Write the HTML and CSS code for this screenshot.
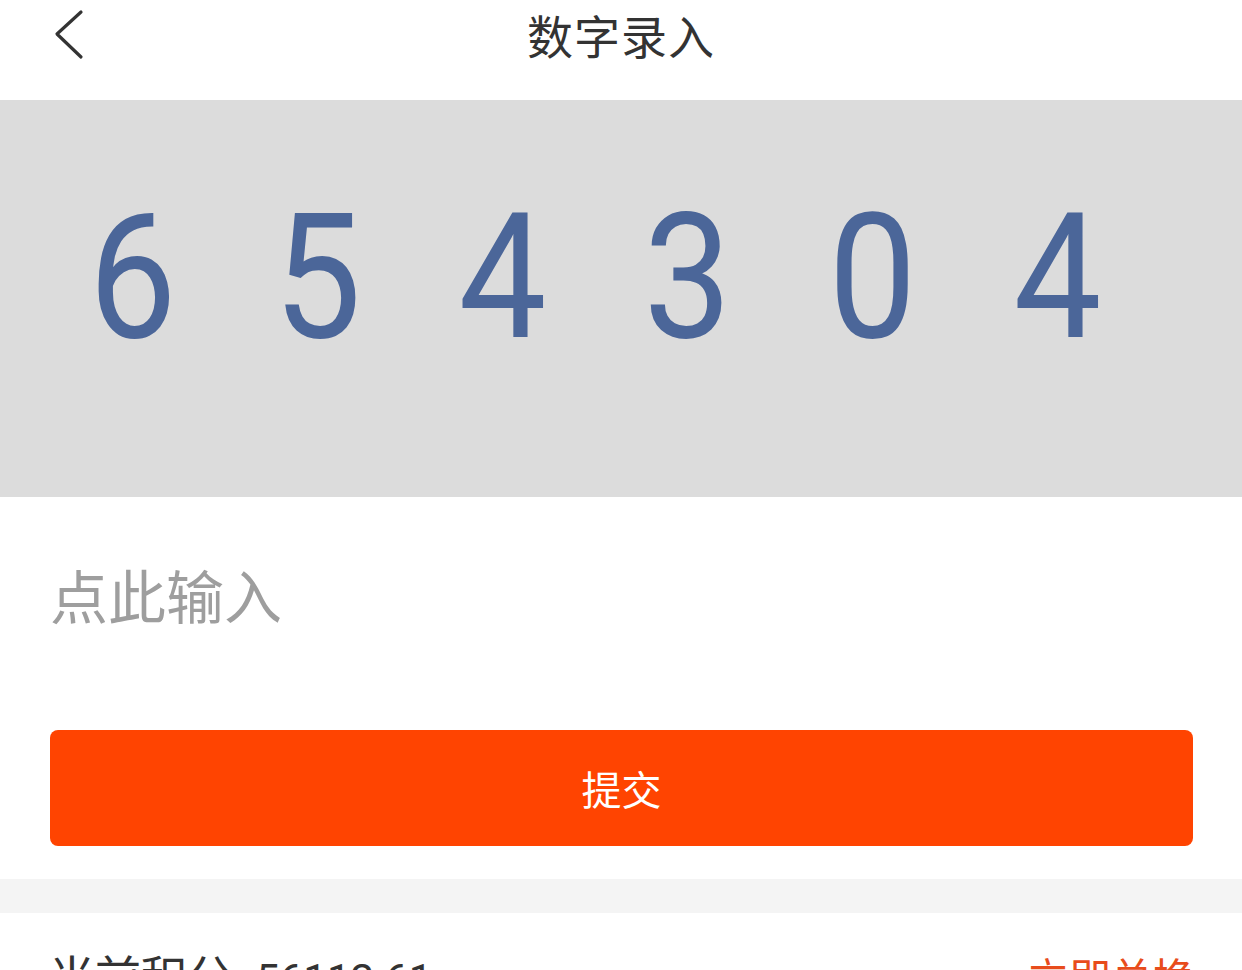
FILE: index.html
```html
<!DOCTYPE html>
<html lang="zh">
<head>
<meta charset="utf-8">
<title>数字录入</title>
<link rel="stylesheet" href="styles.css">
</head>
<body>
<div class="page">
  <header class="topbar">
    <span class="back">
      <svg width="40" height="60" viewBox="0 0 40 60"><path d="M30 10 L6 32 L30 55" fill="none" stroke="#333" stroke-width="3.2" stroke-linecap="round" stroke-linejoin="round"/></svg>
    </span>
    <h1 class="title">数字录入</h1>
  </header>
  <section class="captcha">
    <div class="digits">
      <span class="digit">6</span>
      <span class="digit">5</span>
      <span class="digit">4</span>
      <span class="digit">3</span>
      <span class="digit">0</span>
      <span class="digit">4</span>
    </div>
  </section>
  <section class="form">
    <div class="input">点此输入</div>
    <button class="submit">提交</button>
  </section>
  <div class="gap"></div>
  <section class="points">
    <span class="label">当前积分: <span class="num">56112.61</span></span>
    <span class="link">立即兑换</span>
  </section>
</div>
</body>
</html>
```
FILE: styles.css
```css
* { box-sizing: border-box; }
html, body { margin: 0; padding: 0; background: #fff; }
body {
  font-family: "Noto Sans CJK SC", "Roboto", sans-serif;
  color: #333;
  overflow: hidden;
}
.page { width: 1242px; }
.topbar {
  height: 100px;
  display: flex;
  align-items: center;
  justify-content: center;
  position: relative;
  background: #fff;
}
.back {
  position: absolute;
  left: 51px;
  top: 0;
  width: 40px;
  height: 64px;
  display: flex;
  align-items: center;
}
.title {
  margin: 0;
  margin-top: -33px;
  font-size: 46px;
  font-weight: 400;
  color: #333;
  letter-spacing: 1px;
}
.captcha {
  height: 397px;
  background: #dcdcdc;
  padding-top: 78px;
  padding-left: 40px;
}
.digits { display: flex; }
.digit {
  display: inline-block;
  width: 185px;
  text-align: center;
  font-family: "Roboto", sans-serif;
  font-size: 174px;
  line-height: 200px;
  color: #4b6699;
  transform: scaleX(0.9);
}
.form {
  padding: 47px 49px 33px 50px;
}
.input {
  height: 186px;
  font-size: 58px;
  line-height: 100px;
  color: #9e9e9e;
}
.submit {
  display: block;
  width: 1143px;
  height: 116px;
  border: none;
  border-radius: 8px;
  background: #ff4401;
  color: #fff;
  font-family: "Noto Sans CJK SC", sans-serif;
  font-size: 40px;
  padding: 0;
}
.gap { height: 34px; background: #f4f4f4; }
.points {
  display: flex;
  justify-content: space-between;
  align-items: baseline;
  padding: 21px 47px 0 49px;
  font-size: 46px;
  line-height: 80px;
}
.label { color: #333; }
.num { font-family: "Roboto", sans-serif; font-size: 42px; }
.link { color: #e84c1c; font-size: 42px; }
```
